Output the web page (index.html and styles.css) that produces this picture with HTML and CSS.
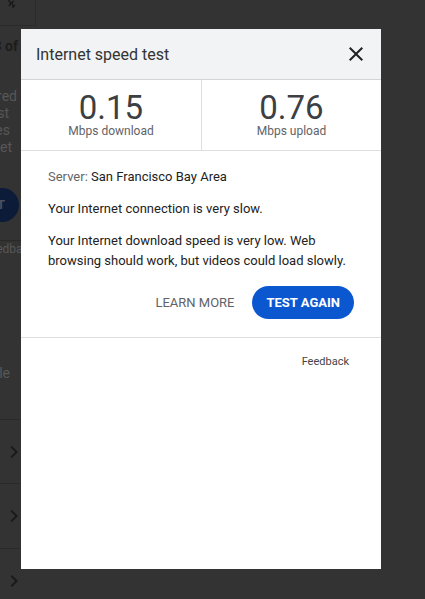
FILE: index.html
```html
<!DOCTYPE html>
<html lang="en">
<head>
<meta charset="utf-8">
<title>Internet speed test</title>
<link rel="stylesheet" href="styles.css">
</head>
<body>
<div class="page">
  <div class="page-top">
    <svg class="page-icon" viewBox="0 0 10 8" width="10" height="8"><path d="M1 0 L4 3 L2 6 M4 3 L7 1 M5 2 L6 7 L8 5" stroke="#1a1a1a" stroke-width="1.5" fill="none"/></svg>
  </div>
  <div class="strip">
    <div class="ln bold pr3">Page 3 of</div>
    <div class="group">
      <div class="ln pr4">measured</div>
      <div class="ln pr12">fastest</div>
      <div class="ln pr11">sites</div>
      <div class="ln pr9">Internet</div>
    </div>
    <div class="pill-line"><span class="pill">TEST</span></div>
    <div class="rule-line"><span class="small cut">Feedback</span></div>
    <div class="ln pr11 mobile">Mobile</div>
    <div class="row first">
      <svg viewBox="0 0 24 24" width="24" height="24"><path d="M10 6L8.59 7.41 13.17 12l-4.58 4.59L10 18l6-6z" fill="#1a1a1a"/></svg>
    </div>
    <div class="row">
      <svg viewBox="0 0 24 24" width="24" height="24"><path d="M10 6L8.59 7.41 13.17 12l-4.58 4.59L10 18l6-6z" fill="#1a1a1a"/></svg>
    </div>
    <div class="row">
      <svg viewBox="0 0 24 24" width="24" height="24"><path d="M10 6L8.59 7.41 13.17 12l-4.58 4.59L10 18l6-6z" fill="#1a1a1a"/></svg>
    </div>
  </div>
</div>

<div class="dialog">
  <div class="dlg-header">
    <span class="dlg-title">Internet speed test</span>
    <svg class="close" viewBox="0 0 24 24" width="24" height="24"><path d="M19 6.41L17.59 5 12 10.59 6.41 5 5 6.41 10.59 12 5 17.59 6.41 19 12 13.41 17.59 19 19 17.59 13.41 12z" fill="#202124"/></svg>
  </div>
  <div class="metrics">
    <div class="metric">
      <div class="num">0.15</div>
      <div class="unit">Mbps download</div>
    </div>
    <div class="metric">
      <div class="num">0.76</div>
      <div class="unit">Mbps upload</div>
    </div>
  </div>
  <div class="dlg-body">
    <p class="server"><span class="muted">Server:</span> San Francisco Bay Area</p>
    <p>Your Internet connection is very slow.</p>
    <p>Your Internet download speed is very low. Web browsing should work, but videos could load slowly.</p>
    <div class="actions">
      <span class="learn">LEARN MORE</span>
      <span class="again">TEST AGAIN</span>
    </div>
  </div>
  <div class="dlg-footer">
    <span class="feedback">Feedback</span>
  </div>
</div>
</body>
</html>
```

FILE: styles.css
```css
html, body {
  margin: 0;
  padding: 0;
  height: 100%;
  background: #333333;
  font-family: Roboto, "Liberation Sans", Arial, sans-serif;
  overflow: hidden;
}

.page {
  display: flex;
  flex-direction: column;
}

.page-top {
  width: 35px;
  height: 25px;
  border-right: 1px solid #2a2a2a;
  border-bottom: 1px solid #2a2a2a;
}

.page-icon {
  display: block;
  margin-left: 7px;
}

.strip {
  width: 21px;
  overflow: hidden;
  display: flex;
  flex-direction: column;
}

.ln {
  display: flex;
  justify-content: flex-end;
  white-space: nowrap;
  font-size: 14px;
  line-height: 17px;
  color: #575757;
}

.ln.bold {
  font-weight: 700;
  color: #1c1c1c;
  line-height: 18px;
  margin-top: 11px;
}

.pr3 { padding-right: 3px; }
.pr4 { padding-right: 4px; }
.pr9 { padding-right: 9px; }
.pr11 { padding-right: 11px; }
.pr12 { padding-right: 12px; }

.group {
  margin-top: 33px;
}

.pill-line {
  margin-top: 32px;
  height: 34px;
  display: flex;
  justify-content: flex-end;
  padding-right: 2px;
}

.pill {
  flex: none;
  height: 34px;
  line-height: 34px;
  padding: 0 14px 0 16px;
  border-radius: 17px;
  background: #0b1b38;
  color: #4a5060;
  font-size: 13px;
  font-weight: 700;
}

.rule-line {
  margin-top: 18px;
  border-top: 1px solid #2a2a2a;
  display: flex;
  justify-content: flex-end;
  white-space: nowrap;
}

.small {
  font-size: 12px;
  line-height: 16px;
  color: #575757;
}

.cut {
  margin-right: -14px;
}

.mobile {
  margin-top: 107px;
  line-height: 18px;
}

.row {
  height: 64px;
  border-top: 1px solid #2a2a2a;
  display: flex;
  align-items: center;
  padding-left: 2px;
}

.row.first {
  margin-top: 37px;
  height: 63px;
}

.row svg {
  flex: none;
}

/* Dialog overlay */
.dialog {
  position: fixed;
  left: 21px;
  top: 29px;
  width: 360px;
  height: 540px;
  background: #ffffff;
  display: flex;
  flex-direction: column;
}

.dlg-header {
  height: 50px;
  background: #f1f3f4;
  border-bottom: 1px solid #d4d4d4;
  display: flex;
  align-items: center;
  justify-content: space-between;
  padding: 0 13px 0 15px;
}

.dlg-title {
  font-size: 16px;
  color: #333333;
}

.close {
  display: block;
}

.metrics {
  display: grid;
  grid-template-columns: 1fr 1fr;
  border-bottom: 1px solid #dedede;
}

.metric {
  height: 70px;
  box-sizing: border-box;
  padding-top: 11px;
  text-align: center;
}

.metric + .metric {
  border-left: 1px solid #dedede;
}

.num {
  font-size: 33px;
  line-height: 33px;
  color: #3c4043;
}

.unit {
  font-size: 12px;
  line-height: 14px;
  color: #5f6368;
}

.dlg-body {
  padding: 16px 27px 18px 27px;
  border-bottom: 1px solid #dedede;
}

.dlg-body p {
  margin: 0 0 12px 0;
  font-size: 13px;
  line-height: 20px;
  color: #222222;
}

.dlg-body p:last-of-type {
  margin-bottom: 0;
}

.muted {
  color: #666666;
}

.actions {
  margin-top: 15px;
  display: flex;
  justify-content: flex-end;
  align-items: center;
  gap: 18px;
}

.learn {
  font-size: 13px;
  color: #5f6368;
}

.again {
  height: 33px;
  line-height: 33px;
  padding: 0 14px;
  border-radius: 17px;
  background: #0b57d0;
  color: #ffffff;
  font-size: 13px;
  font-weight: 700;
}

.dlg-footer {
  display: flex;
  justify-content: flex-end;
  padding: 16px 32px 0 0;
}

.feedback {
  font-size: 11px;
  line-height: 16px;
  color: #444444;
}
```
